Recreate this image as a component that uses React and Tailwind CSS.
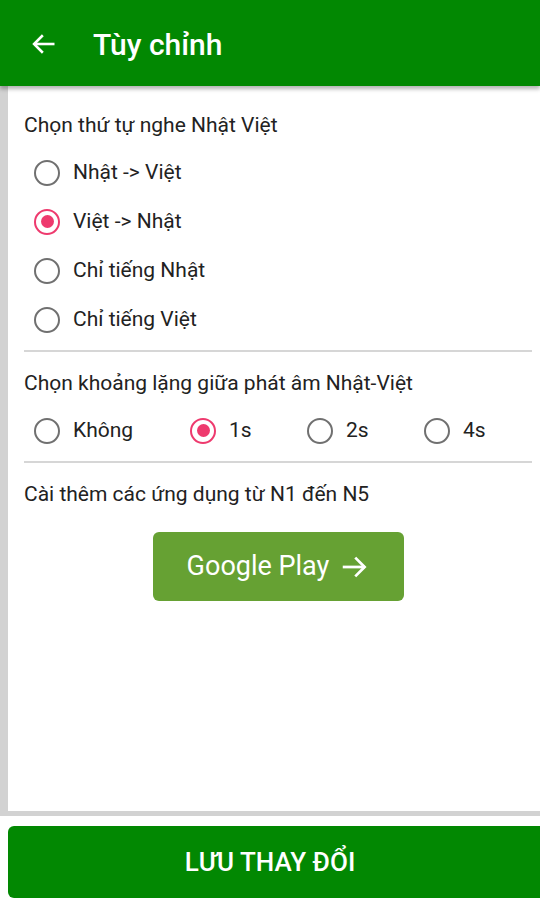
import { useState } from "react";

function Radio({ checked, label, onClick }) {
  return (
    <button onClick={onClick} className="flex items-center gap-[13px] h-[49px]">
      {checked ? (
        <span className="w-[26px] h-[26px] rounded-full border-2 border-[#ee3a6e] flex items-center justify-center">
          <span className="w-[13px] h-[13px] rounded-full bg-[#ee3a6e]"></span>
        </span>
      ) : (
        <span className="w-[26px] h-[26px] rounded-full border-2 border-[#707070]"></span>
      )}
      <span className="text-[21px] text-[#222]">{label}</span>
    </button>
  );
}

export default function App() {
  let [order, setOrder] = useState(1);
  let [pause, setPause] = useState(1);

  let orders = ["Nhật -> Việt", "Việt -> Nhật", "Chỉ tiếng Nhật", "Chỉ tiếng Việt"];
  let pauses = ["Không", "1s", "2s", "4s"];

  return (
    <div className="w-[540px] h-[900px] flex flex-col bg-white overflow-hidden" style={{ fontFamily: "Roboto, 'Noto Sans', sans-serif" }}>
      <div className="h-[86px] bg-[#028802] flex items-center shrink-0 relative z-10 shadow-[0_3px_4px_rgba(0,0,0,0.3)]">
        <svg className="ml-[30px] mt-[2px]" width="28" height="28" viewBox="0 0 24 24" fill="none" stroke="white" strokeWidth="2.2">
          <path d="M21 12H3.5" />
          <path d="M11 4.5L3.5 12l7.5 7.5" />
        </svg>
        <h1 className="ml-[35px] text-[30px] font-medium text-white mt-[2px]">Tùy chỉnh</h1>
      </div>

      <div className="flex-1 bg-[#d2d2d2] pl-[8px] pb-[5px] flex">
        <div className="flex-1 bg-white pl-[16px] pr-[8px] pt-[25px]">
          <p className="text-[21px] text-[#222] leading-[28px]">Chọn thứ tự nghe Nhật Việt</p>
          <div className="flex flex-col items-start pl-[10px] pt-[9px]">
            {orders.map((o, i) => (
              <Radio key={i} checked={order == i} label={o} onClick={() => setOrder(i)} />
            ))}
          </div>
          <div className="h-[2px] bg-[#d6d6d6] mt-[6px]"></div>

          <p className="text-[21px] text-[#222] leading-[28px] mt-[17px]">Chọn khoảng lặng giữa phát âm Nhật-Việt</p>
          <div className="grid grid-cols-[156px_117px_117px_1fr] pl-[10px] pt-[9px]">
            {pauses.map((p, i) => (
              <Radio key={i} checked={pause == i} label={p} onClick={() => setPause(i)} />
            ))}
          </div>
          <div className="h-[2px] bg-[#d6d6d6] mt-[6px]"></div>

          <p className="text-[21px] text-[#222] leading-[28px] mt-[17px]">Cài thêm các ứng dụng từ N1 đến N5</p>
          <div className="flex justify-center mt-[24px]">
            <button className="w-[251px] h-[69px] rounded-[6px] bg-[#66a133] text-white text-[27px] flex items-center justify-center gap-[10px]">
              Google Play
              <svg width="30" height="30" viewBox="0 0 24 24" fill="none" stroke="white" strokeWidth="2.2">
                <path d="M3 12h17.5" />
                <path d="M13 4.5l7.5 7.5-7.5 7.5" />
              </svg>
            </button>
          </div>
        </div>
      </div>

      <div className="bg-white pt-[10px] pl-[8px] shrink-0">
        <button className="w-full h-[72px] bg-[#028802] rounded-l-[6px] text-white text-[26px] font-medium flex items-center justify-center pr-[8px] mb-[2px]">
          LƯU THAY ĐỔI
        </button>
      </div>
    </div>
  );
}
